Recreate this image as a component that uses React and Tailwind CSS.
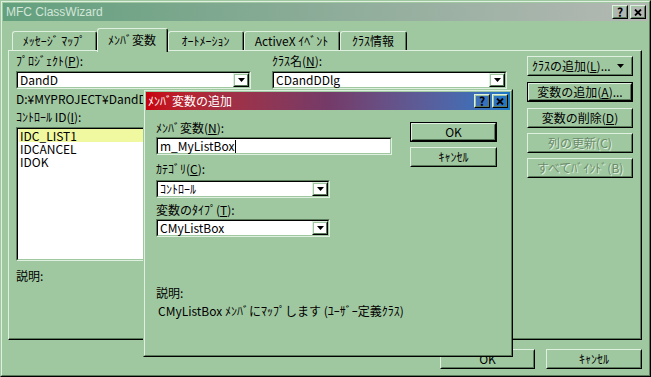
import React from "react";

// Win95-style palette (green face scheme)
// face #a0c8a0, light #e0f0e0, shadow #5a7c5a, dark black

function Raised({ className = "", def = false, children }) {
  const inner = (
    <div className="h-full border border-t-[#e0f0e0] border-l-[#e0f0e0] border-r-black border-b-black">
      <div className="h-full flex items-center justify-center border border-t-[#a0c8a0] border-l-[#a0c8a0] border-r-[#5a7c5a] border-b-[#5a7c5a]">
        {children}
      </div>
    </div>
  );
  if (def) return <div className={`border border-black ${className}`}>{inner}</div>;
  return <div className={className}>{inner}</div>;
}

function Sunken({ className = "", children }) {
  return (
    <div className={`border border-t-[#5a7c5a] border-l-[#5a7c5a] border-r-[#e0f0e0] border-b-[#e0f0e0] ${className}`}>
      <div className="h-full border border-t-black border-l-black border-r-[#a0c8a0] border-b-[#a0c8a0] bg-white">
        {children}
      </div>
    </div>
  );
}

function Arrow() {
  return (
    <svg width="7" height="4" viewBox="0 0 7 4">
      <path d="M0 0H7L3.5 4Z" fill="#000" />
    </svg>
  );
}

function Combo({ className = "", text }) {
  return (
    <Sunken className={`h-[18px] ${className}`}>
      <div className="h-full flex items-center">
        <div className="flex-1 pl-[2px] leading-[12px] whitespace-nowrap">{text}</div>
        <Raised className="w-[16px] h-full">
          <Arrow />
        </Raised>
      </div>
    </Sunken>
  );
}

function Label({ className = "", children }) {
  return <div className={`h-[12px] leading-[12px] whitespace-nowrap ${className}`}>{children}</div>;
}

function Disabled({ children }) {
  return <span className="text-[#6a8c6a] [text-shadow:1px_1px_0_#e0f0e0]">{children}</span>;
}

function TitleButtons() {
  return (
    <div className="flex gap-[2px] pr-[2px]">
      <Raised className="w-[16px] h-[14px]">
        <span className="font-bold text-black text-[12px] leading-[10px]">?</span>
      </Raised>
      <Raised className="w-[16px] h-[14px]">
        <svg width="8" height="7" viewBox="0 0 8 7">
          <path d="M1 0.5L7 6.5M7 0.5L1 6.5" stroke="#000" strokeWidth="1.8" />
        </svg>
      </Raised>
    </div>
  );
}

function Tab({ w, selected, children }) {
  return (
    <div
      className={`${w} ${selected ? "h-[24px] -mb-[2px] relative z-10 bg-[#a0c8a0]" : "h-[19px]"} rounded-t-[3px] border-t border-l border-r border-t-[#e0f0e0] border-l-[#e0f0e0] border-r-black`}
    >
      <div className="h-full flex items-center justify-center border-r border-r-[#5a7c5a] pb-[1px] whitespace-nowrap">
        {children}
      </div>
    </div>
  );
}

const U = ({ children }) => <span className="underline underline-offset-[1px]">{children}</span>;

export default function App() {
  return (
    <div className="relative w-[651px] h-[377px] overflow-hidden bg-[#a0c8a0] text-black text-[12px] font-['Noto_Sans_CJK_JP','Noto_Sans',sans-serif]">
      {/* main window */}
      <div className="w-full h-full border border-t-[#a0c8a0] border-l-[#a0c8a0] border-r-black border-b-black">
        <div className="w-full h-full border border-t-[#e0f0e0] border-l-[#e0f0e0] border-r-[#5a7c5a] border-b-[#5a7c5a] p-[1px]">
          {/* inactive title bar */}
          <div className="h-[18px] flex items-center justify-between bg-linear-to-r from-[#62a07e] to-[#b4b8b4]">
            <span className="pl-[3px] text-[#d4e6d8] text-[12px] leading-[14px] font-['Liberation_Sans',sans-serif]">
              MFC ClassWizard
            </span>
            <TitleButtons />
          </div>

          {/* tabs */}
          <div className="mt-[7px] h-[22px] pl-[9px] flex items-end">
            <Tab w="w-[85px]">ﾒｯｾｰｼﾞ ﾏｯﾌﾟ</Tab>
            <Tab w="w-[71px]" selected>ﾒﾝﾊﾞ変数</Tab>
            <Tab w="w-[76px]">ｵｰﾄﾒｰｼｮﾝ</Tab>
            <Tab w="w-[96px]">ActiveX ｲﾍﾞﾝﾄ</Tab>
            <Tab w="w-[67px]">ｸﾗｽ情報</Tab>
          </div>

          {/* tab panel */}
          <div className="ml-[5px] w-[634px] h-[290px] border border-t-[#e0f0e0] border-l-[#e0f0e0] border-r-black border-b-black">
            <div className="h-full flex border-r border-b border-r-[#5a7c5a] border-b-[#5a7c5a]">
              <div className="ml-[7px] w-[491px] pt-[4px] flex flex-col">
                <div className="flex gap-[21px]">
                  <div className="w-[235px]">
                    <Label>ﾌﾟﾛｼﾞｪｸﾄ(<U>P</U>):</Label>
                    <Combo className="mt-[4px]" text="DandD" />
                  </div>
                  <div className="w-[235px]">
                    <Label>ｸﾗｽ名(<U>N</U>):</Label>
                    <Combo className="mt-[4px]" text="CDandDDlg" />
                  </div>
                </div>
                <Label className="mt-[4px]">D:¥MYPROJECT¥DandD</Label>
                <Label className="mt-[6px]">ｺﾝﾄﾛｰﾙ ID(<U>I</U>):</Label>
                <Sunken className="mt-[4px] h-[134px] w-[491px]">
                  <div className="pl-[1px] flex flex-col">
                    <div className="h-[13px] leading-[13px] pl-[1px] bg-[#f0f8a0]">IDC_LIST1</div>
                    <div className="h-[13px] leading-[13px] pl-[1px]">IDCANCEL</div>
                    <div className="h-[13px] leading-[13px] pl-[1px]">IDOK</div>
                  </div>
                </Sunken>
                <Label className="mt-[9px]">説明:</Label>
              </div>

              <div className="ml-[20px] w-[106px] pt-[5px] flex flex-col">
                <Raised className="h-[20px]">
                  <div className="w-full flex items-center justify-between pl-[3px] pr-[7px]">
                    <span className="whitespace-nowrap">ｸﾗｽの追加(<U>L</U>)...</span>
                    <Arrow />
                  </div>
                </Raised>
                <Raised def className="h-[20px] mt-[6px]">
                  <span className="whitespace-nowrap">変数の追加(<U>A</U>)...</span>
                </Raised>
                <Raised className="h-[20px] mt-[6px]">
                  <span className="whitespace-nowrap">変数の削除(<U>D</U>)</span>
                </Raised>
                <Raised className="h-[20px] mt-[5px]">
                  <Disabled>列の更新(C)</Disabled>
                </Raised>
                <Raised className="h-[20px] mt-[5px]">
                  <Disabled>すべてﾊﾞｲﾝﾄﾞ(B)</Disabled>
                </Raised>
              </div>
            </div>
          </div>

          {/* bottom buttons */}
          <div className="mt-[9px] flex justify-end gap-[11px] pr-[6px]">
            <Raised className="w-[95px] h-[20px]">OK</Raised>
            <Raised className="w-[96px] h-[20px]">ｷｬﾝｾﾙ</Raised>
          </div>
        </div>
      </div>

      {/* modal: add member variable */}
      <div className="absolute left-[143px] top-[89px] w-[370px] h-[268px] border border-t-[#a0c8a0] border-l-[#a0c8a0] border-r-black border-b-black bg-[#a0c8a0]">
        <div className="w-full h-full border border-t-[#e0f0e0] border-l-[#e0f0e0] border-r-[#5a7c5a] border-b-[#5a7c5a] p-[1px]">
          <div className="h-[18px] flex items-center justify-between bg-linear-to-r from-[#c8000c] via-[#743a68] to-[#1878c8]">
            <span className="pl-[2px] text-white leading-[12px]">ﾒﾝﾊﾞ変数の追加</span>
            <TitleButtons />
          </div>
          <div className="flex">
            <div className="ml-[10px] w-[236px] flex flex-col">
              <Label className="mt-[12px]">ﾒﾝﾊﾞ変数(<U>N</U>):</Label>
              <Sunken className="mt-[3px] h-[18px]">
                <div className="h-full flex items-center pl-[2px] leading-[12px]">
                  m_MyListBox<span className="inline-block w-[1px] h-[13px] bg-black ml-[1px]" />
                </div>
              </Sunken>
              <Label className="mt-[8px]">ｶﾃｺﾞﾘ(<U>C</U>):</Label>
              <Combo className="mt-[5px] w-[174px]" text="ｺﾝﾄﾛｰﾙ" />
              <Label className="mt-[6px]">変数のﾀｲﾌﾟ(<U>T</U>):</Label>
              <Combo className="mt-[3px] w-[174px]" text="CMyListBox" />
              <Label className="mt-[50px]">説明:</Label>
              <Label className="mt-[6px] ml-[2px]">CMyListBox ﾒﾝﾊﾞにﾏｯﾌﾟします (ﾕｰｻﾞｰ定義ｸﾗｽ)</Label>
            </div>
            <div className="ml-[18px] w-[87px] flex flex-col">
              <Raised def className="mt-[12px] h-[20px]">OK</Raised>
              <Raised className="mt-[5px] h-[20px]">ｷｬﾝｾﾙ</Raised>
            </div>
          </div>
        </div>
      </div>
    </div>
  );
}
